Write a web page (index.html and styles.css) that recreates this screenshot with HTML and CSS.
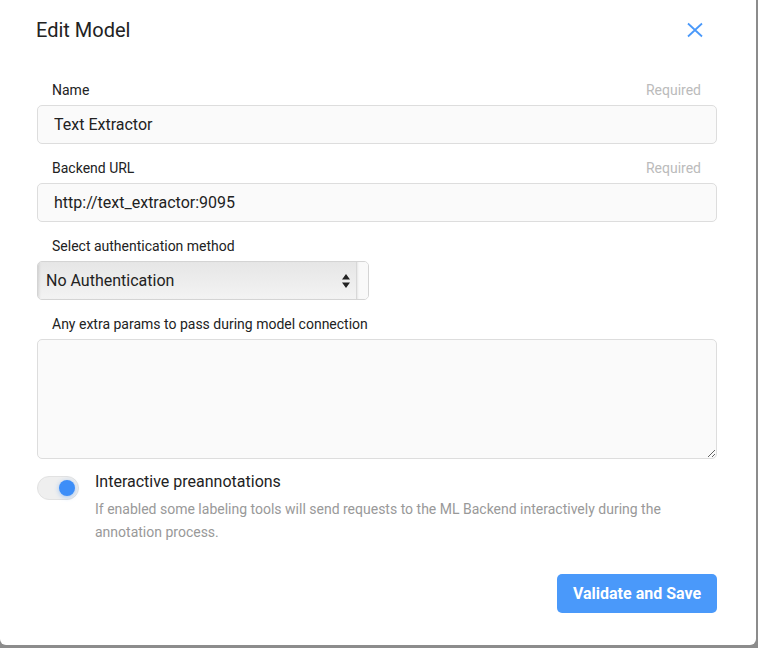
FILE: index.html
```html
<!DOCTYPE html>
<html>
<head>
<meta charset="utf-8">
<link rel="stylesheet" href="styles.css">
</head>
<body>
<div class="modal">
  <header class="modal-header">
    <h2 class="modal-title">Edit Model</h2>
    <button class="close" aria-label="Close">
      <svg width="16" height="16" viewBox="0 0 16 16"><path d="M1 1.5L15 14.5M15 1.5L1 14.5" stroke="#4a99fa" stroke-width="1.8" fill="none"/></svg>
    </button>
  </header>
  <form class="form">
    <div class="field">
      <div class="label-row"><label class="label">Name</label><span class="req">Required</span></div>
      <input class="input" type="text" value="Text Extractor">
    </div>
    <div class="field">
      <div class="label-row"><label class="label">Backend URL</label><span class="req">Required</span></div>
      <input class="input" type="text" value="http://text_extractor:9095">
    </div>
    <div class="field">
      <div class="label-row"><label class="label">Select authentication method</label></div>
      <div class="select">
        <span class="select-value">No Authentication</span>
        <span class="select-arrow"><svg width="8" height="14" viewBox="0 0 8 14"><path d="M4 0L8 5.5H0Z M4 14L8 8.5H0Z" fill="#222"/></svg></span>
        <span class="select-end"></span>
      </div>
    </div>
    <div class="field field-last">
      <div class="label-row"><label class="label">Any extra params to pass during model connection</label></div>
      <textarea class="textarea"></textarea>
    </div>
    <div class="toggle-row">
      <span class="toggle"><span class="knob"></span></span>
      <div class="toggle-text">
        <div class="toggle-title">Interactive preannotations</div>
        <div class="toggle-desc">If enabled some labeling tools will send requests to the ML Backend interactively during the annotation process.</div>
      </div>
    </div>
    <div class="actions">
      <button type="button" class="primary">Validate and Save</button>
    </div>
  </form>
</div>
</body>
</html>
```
FILE: styles.css
```css
html, body {
  margin: 0;
  padding: 0;
}
body {
  background: #8c8c8c;
  width: 758px;
  height: 648px;
  overflow: hidden;
  font-family: Roboto, "Liberation Sans", sans-serif;
  color: #222;
}
.modal {
  width: 756px;
  height: 645px;
  background: #fff;
  border-radius: 0 0 6px 6px;
  box-sizing: border-box;
  padding: 18px 39px 0 36px;
}
.modal-header {
  display: flex;
  justify-content: space-between;
  align-items: center;
  height: 24px;
}
.modal-title {
  margin: 0;
  font-size: 20px;
  line-height: 24px;
  font-weight: 400;
  color: #222;
}
.close {
  border: 0;
  background: none;
  padding: 0;
  margin-right: 14px;
  width: 16px;
  height: 16px;
  display: flex;
}
.form {
  margin-top: 40px;
  padding-left: 1px;
  display: flex;
  flex-direction: column;
}
.field {
  display: flex;
  flex-direction: column;
  margin-bottom: 16px;
}
.field-last {
  margin-bottom: 17px;
}
.label-row {
  display: flex;
  justify-content: space-between;
  padding: 0 16px 0 15px;
  font-size: 14px;
  line-height: 16px;
  margin-bottom: 7px;
}
.label {
  color: #222;
}
.req {
  color: #bbb;
}
.input {
  box-sizing: border-box;
  height: 39px;
  border: 1px solid #ddd;
  border-radius: 5px;
  background: #fafafa;
  padding: 0 16px;
  font-family: inherit;
  font-size: 16px;
  color: #222;
  outline: none;
  width: 100%;
}
.select {
  box-sizing: border-box;
  width: 332px;
  height: 39px;
  border: 1px solid #d4d4d4;
  border-radius: 5px;
  display: flex;
  align-items: stretch;
  overflow: hidden;
  background: #fafafa;
}
.select-value {
  flex: 1;
  display: flex;
  align-items: center;
  padding-left: 8px;
  font-size: 16px;
  background: linear-gradient(#e6e6e6, #f3f3f3);
  box-shadow: inset 3px 0 3px -2px rgba(0,0,0,0.12);
}
.select-arrow {
  display: flex;
  align-items: center;
  padding: 0 6px 0 0;
  background: linear-gradient(#e6e6e6, #f3f3f3);
}
.select-end {
  width: 11px;
  background: #f9f9f9;
  border-left: 1px solid #d8d8d8;
  box-shadow: inset 2px 0 2px -1px rgba(0,0,0,0.08);
}
.textarea {
  box-sizing: border-box;
  height: 120px;
  border: 1px solid #ddd;
  border-radius: 5px;
  background: #fafafa;
  resize: vertical;
  width: 100%;
  font-family: inherit;
  outline: none;
}
.toggle-row {
  display: flex;
  align-items: flex-start;
  margin-top: -4px;
}
.toggle {
  box-sizing: border-box;
  width: 42px;
  height: 24px;
  margin-top: 4px;
  border-radius: 12px;
  background: #efefef;
  border: 1px solid #e2e2e2;
  display: flex;
  align-items: center;
  justify-content: flex-end;
  padding-right: 3px;
  flex: none;
}
.knob {
  width: 16px;
  height: 16px;
  border-radius: 50%;
  background: #3d8ef8;
  box-shadow: 0 1px 5px rgba(61,142,248,0.45);
}
.toggle-text {
  margin-left: 16px;
  flex: 1;
}
.toggle-title {
  font-size: 16px;
  line-height: 20px;
  color: #222;
  margin-bottom: 6px;
}
.toggle-desc {
  font-size: 14px;
  line-height: 23px;
  color: #999;
  padding-right: 40px;
}
.actions {
  display: flex;
  justify-content: flex-end;
  margin-top: 30px;
}
.primary {
  width: 160px;
  height: 39px;
  border: 0;
  border-radius: 5px;
  background: #4a99fa;
  color: #fff;
  font-family: inherit;
  font-size: 16px;
  font-weight: 700;
  padding: 0;
}
```
